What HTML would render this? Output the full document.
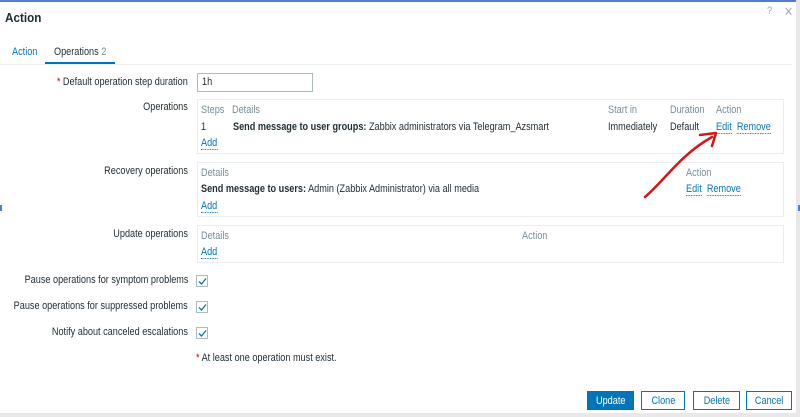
<!DOCTYPE html>
<html><head><meta charset="utf-8"><style>
*{margin:0;padding:0;box-sizing:border-box}
body{width:800px;height:417px;background:#fff;position:relative;overflow:hidden;font-family:"Liberation Sans",Arial,sans-serif;font-size:11px;color:#1f2c33}
.a{position:absolute;white-space:nowrap;transform:scaleX(.83);transform-origin:left center;line-height:13px}
.r{transform-origin:right center;text-align:right}
.g{color:#768d99}
.l{color:#0275b8;border-bottom:1px dotted #0275b8;line-height:12px}
.box{position:absolute;border:1px solid #ebeef0;left:197px;width:587px}
.cb{position:absolute;left:196px;width:12px;height:12px;border:1px solid #acbbc2;background:#fff}
.cb svg{position:absolute;left:1px;top:1px}
.btn{position:absolute;top:391px;height:19px;border:1px solid #0275b8;color:#0275b8;background:#fff;font-size:11px;display:flex;align-items:center;justify-content:center}
.btn span{transform:scaleX(.83)}
</style></head><body>
<div style="position:absolute;left:0;top:0;width:800px;height:2px;background:#4f7ed0"></div>
<div class="a" style="left:5px;top:11px;font-size:13px;font-weight:bold;transform:scaleX(.9)">Action</div>
<div class="a g" style="left:767px;top:5px;color:#aab">?</div>
<div class="a g" style="left:784px;top:5px;font-size:13px;color:#aab">✕</div>
<div style="position:absolute;left:0;top:64px;width:792px;height:1px;background:#ebeef0"></div>
<div class="a" style="left:12px;top:46px;color:#0275b8">Action</div>
<div class="a" style="left:54px;top:46px">Operations <span class="g">2</span></div>
<div style="position:absolute;left:45px;top:62px;width:70px;height:2px;background:#0275b8"></div>

<div class="a r" style="right:612px;top:76px"><span style="color:#d40000">*</span> Default operation step duration</div>
<div style="position:absolute;left:197px;top:73px;width:116px;height:19px;border:1px solid #acbbc2"></div>
<div class="a" style="left:202px;top:76px">1h</div>

<div class="a r" style="right:612px;top:101px">Operations</div>
<div class="box" style="top:99px;height:55px"></div>
<div class="a g" style="left:201px;top:104px">Steps</div>
<div class="a g" style="left:232px;top:104px">Details</div>
<div class="a g" style="left:608px;top:104px">Start in</div>
<div class="a g" style="left:670px;top:104px">Duration</div>
<div class="a g" style="left:716px;top:104px">Action</div>
<div class="a" style="left:201px;top:121px">1</div>
<div class="a" style="left:233px;top:121px"><b>Send message to user groups:</b> Zabbix administrators via Telegram_Azsmart</div>
<div class="a" style="left:608px;top:121px">Immediately</div>
<div class="a" style="left:670px;top:121px">Default</div>
<div class="a" style="left:716px;top:121px"><span class="l">Edit</span>&nbsp; <span class="l">Remove</span></div>
<div class="a" style="left:201px;top:137px"><span class="l">Add</span></div>

<div class="a r" style="right:612px;top:165px">Recovery operations</div>
<div class="box" style="top:162px;height:55px"></div>
<div class="a g" style="left:201px;top:167px">Details</div>
<div class="a g" style="left:686px;top:167px">Action</div>
<div class="a" style="left:201px;top:183px"><b>Send message to users:</b> Admin (Zabbix Administrator) via all media</div>
<div class="a" style="left:686px;top:183px"><span class="l">Edit</span>&nbsp; <span class="l">Remove</span></div>
<div class="a" style="left:201px;top:200px"><span class="l">Add</span></div>

<div class="a r" style="right:612px;top:228px">Update operations</div>
<div class="box" style="top:225px;height:38px"></div>
<div class="a g" style="left:201px;top:230px">Details</div>
<div class="a g" style="left:522px;top:230px">Action</div>
<div class="a" style="left:201px;top:246px"><span class="l">Add</span></div>

<div class="a r" style="right:612px;top:274px">Pause operations for symptom problems</div>
<div class="cb" style="top:275px"><svg width="9" height="9"><path d="M1 4.5L3.5 7L8 1.5" stroke="#0275b8" stroke-width="1.3" fill="none"/></svg></div>
<div class="a r" style="right:612px;top:300px">Pause operations for suppressed problems</div>
<div class="cb" style="top:301px"><svg width="9" height="9"><path d="M1 4.5L3.5 7L8 1.5" stroke="#0275b8" stroke-width="1.3" fill="none"/></svg></div>
<div class="a r" style="right:612px;top:326px">Notify about canceled escalations</div>
<div class="cb" style="top:327px"><svg width="9" height="9"><path d="M1 4.5L3.5 7L8 1.5" stroke="#0275b8" stroke-width="1.3" fill="none"/></svg></div>
<div class="a" style="left:196px;top:352px"><span style="color:#d40000">*</span> At least one operation must exist.</div>

<div class="btn" style="left:587px;width:47px;background:#0275b8;color:#fff"><span>Update</span></div>
<div class="btn" style="left:641px;width:44px"><span>Clone</span></div>
<div class="btn" style="left:693px;width:47px"><span>Delete</span></div>
<div class="btn" style="left:746px;width:46px"><span>Cancel</span></div>
<div style="position:absolute;left:0;top:413px;width:800px;height:4px;background:#e8e8e8"></div>
<div style="position:absolute;left:796px;top:0;width:4px;height:417px;background:#e8e8e8"></div>
<div style="position:absolute;left:0;top:205px;width:2px;height:6px;background:#4f7ed0"></div>
<div style="position:absolute;right:0;top:205px;width:2px;height:6px;background:#4f7ed0"></div>

<svg style="position:absolute;left:0;top:0" width="800" height="417">
<path d="M645 197 C665 180,680 155,712 137" stroke="#d01818" stroke-width="2.5" fill="none" stroke-linecap="round"/>
<path d="M700 135 L716 133 L712 146" stroke="#d01818" stroke-width="2.5" fill="none" stroke-linecap="round" stroke-linejoin="round"/>
</svg>
</body></html>
